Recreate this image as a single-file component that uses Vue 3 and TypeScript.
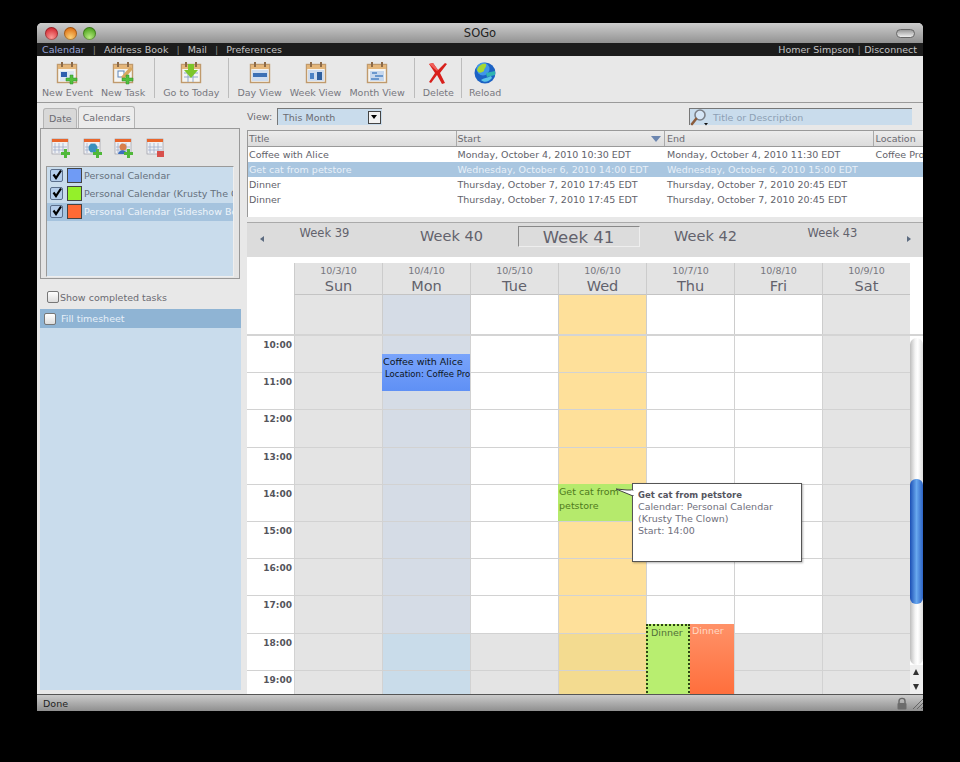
<script setup lang="ts">
import { ref } from 'vue';

const toolbar = [
  [
    { label: 'New Event', icon: 'event' },
    { label: 'New Task', icon: 'task' },
  ],
  [{ label: 'Go to Today', icon: 'today' }],
  [
    { label: 'Day View', icon: 'day' },
    { label: 'Week View', icon: 'week' },
    { label: 'Month View', icon: 'month' },
  ],
  [{ label: 'Delete', icon: 'delete' }],
  [{ label: 'Reload', icon: 'reload' }],
];

const calendars = [
  { name: 'Personal Calendar', color: '#6f9bf5', selected: false },
  { name: 'Personal Calendar (Krusty The Clown)', color: '#94f02a', selected: false },
  { name: 'Personal Calendar (Sideshow Bob)', color: '#ff6a35', selected: true },
];

const rows = [
  {
    title: 'Coffee with Alice',
    start: 'Monday, October 4, 2010 10:30 EDT',
    end: 'Monday, October 4, 2010 11:30 EDT',
    location: 'Coffee Project',
    selected: false,
  },
  {
    title: 'Get cat from petstore',
    start: 'Wednesday, October 6, 2010 14:00 EDT',
    end: 'Wednesday, October 6, 2010 15:00 EDT',
    location: '',
    selected: true,
  },
  {
    title: 'Dinner',
    start: 'Thursday, October 7, 2010 17:45 EDT',
    end: 'Thursday, October 7, 2010 20:45 EDT',
    location: '',
    selected: false,
  },
  {
    title: 'Dinner',
    start: 'Thursday, October 7, 2010 17:45 EDT',
    end: 'Thursday, October 7, 2010 20:45 EDT',
    location: '',
    selected: false,
  },
];

const days = [
  { date: '10/3/10', name: 'Sun', kind: 'weekend' },
  { date: '10/4/10', name: 'Mon', kind: 'mon' },
  { date: '10/5/10', name: 'Tue', kind: '' },
  { date: '10/6/10', name: 'Wed', kind: 'today' },
  { date: '10/7/10', name: 'Thu', kind: '' },
  { date: '10/8/10', name: 'Fri', kind: '' },
  { date: '10/9/10', name: 'Sat', kind: 'weekend' },
];

const hours = [10, 11, 12, 13, 14, 15, 16, 17, 18, 19];

const activeTab = ref('Calendars');
</script>

<template>
  <div class="page">
    <div class="window">
      <div class="titlebar">
        <div class="lights">
          <span class="light red"></span>
          <span class="light orange"></span>
          <span class="light green"></span>
        </div>
        <div class="title">SOGo</div>
        <span class="pill"></span>
      </div>

      <div class="nav">
        <div class="nav-links">
          <span class="current">Calendar</span><i>|</i>
          <span>Address Book</span><i>|</i>
          <span>Mail</span><i>|</i>
          <span>Preferences</span>
        </div>
        <div class="nav-links user">
          <span>Homer Simpson</span><i>|</i><span>Disconnect</span>
        </div>
      </div>

      <div class="toolbar">
        <div v-for="(group, g) in toolbar" :key="g" class="tool-group">
          <div v-for="tool in group" :key="tool.label" class="tool">
            <svg width="24" height="24" viewBox="0 0 24 24">
              <template v-if="tool.icon === 'delete'">
                <path d="M3 3 L7 2 L12 9 L19 2 L21 3 L14 12 L19 22 L16 23 L11 14 L5 22 L3 21 L9 12 Z" fill="#d8201c" />
                <path d="M3 3 L7 2 L12 9 L11 10 Z" fill="#f0605a" />
              </template>
              <template v-else-if="tool.icon === 'reload'">
                <circle cx="12" cy="12" r="10.5" fill="#1c62c4" />
                <circle cx="10" cy="8" r="6.5" fill="#3f96ea" />
                <path d="M4 9 C6 3 11 2 13 3 C14 6 11 7 11 10 C8 12 6 13 4 9 Z" fill="#a5d832" />
                <path d="M13 12 L22 10 L22 14 L14 16 Z" fill="#2fb4b0" />
                <path d="M8 19 C11 17 14 17 18 15 L19 17 C16 21 11 22 8 19 Z" fill="#5cc4e8" />
              </template>
              <template v-else>
                <rect x="2.5" y="3.5" width="19" height="18" fill="#f4f4f2" stroke="#c09a6c" stroke-width="1.4" />
                <rect x="3" y="4" width="18" height="4" fill="#e4b67a" />
                <rect x="6" y="1" width="2" height="5" fill="#8c6a48" />
                <rect x="16" y="1" width="2" height="5" fill="#8c6a48" />
                <template v-if="tool.icon === 'day'">
                  <rect x="4" y="9" width="16" height="11" fill="#cfdcee" />
                  <rect x="5" y="12" width="14" height="4" fill="#3c6fb4" />
                </template>
                <template v-if="tool.icon === 'week'">
                  <rect x="4" y="9" width="16" height="11" fill="#cfdcee" />
                  <rect x="6" y="12" width="4" height="6" fill="#4d82c4" />
                  <rect x="13" y="11" width="5" height="8" fill="#2f5f9e" />
                </template>
                <template v-if="tool.icon === 'month'">
                  <rect x="5" y="10" width="14" height="10" fill="#c7d8ee" />
                  <path d="M7 12 H12 M10 15 H18 M6 18 H14" stroke="#4d82c4" stroke-width="1.5" />
                </template>
                <template v-if="tool.icon === 'event'">
                  <rect x="5" y="10" width="14" height="10" fill="#dde6f2" />
                  <rect x="6" y="11" width="6" height="5" fill="#2f5fae" />
                </template>
                <template v-if="tool.icon === 'task'">
                  <rect x="7" y="10" width="6" height="6" fill="#fff" stroke="#5d84b8" />
                  <path d="M10 16 L19 6 L22 8 L13 18 Z" fill="#d8a860" />
                </template>
                <template v-if="tool.icon === 'today'">
                  <path d="M5 12 H19 M5 16 H19 M9 9 V21 M14 9 V21" stroke="#8fa8cc" />
                  <path d="M9 3 H15 V9 H19 L12 17 L5 9 H9 Z" fill="#7cc62a" />
                </template>
                <template v-if="tool.icon === 'event' || tool.icon === 'task'">
                  <path d="M15 14 H18 V17 H22 V20 H18 V23 H15 V20 H11 V17 H15 Z" fill="#52c03c" stroke="#2f8c2a" stroke-width=".5" />
                </template>
              </template>
            </svg>
            <span>{{ tool.label }}</span>
          </div>
        </div>
      </div>

      <div class="main">
        <aside class="sidebar">
          <div class="tabs">
            <span class="tab" :class="{ active: activeTab === 'Date' }">Date</span>
            <span class="tab" :class="{ active: activeTab === 'Calendars' }">Calendars</span>
          </div>
          <div class="cal-panel">
            <div class="cal-tools">
              <svg v-for="n in 4" :key="n" width="20" height="20" viewBox="0 0 20 20">
                <rect x="1" y="1" width="16" height="15" fill="#eef0f4" stroke="#8f8f9c" stroke-width=".6" />
                <rect x="1" y="1" width="16" height="3" fill="#e8662c" />
                <path d="M4 5 V15 M8 5 V15 M12 5 V15 M2 9 H16 M2 12 H16" stroke="#9aa8c4" stroke-width=".7" />
                <circle v-if="n === 2" cx="10" cy="10" r="4.5" fill="#3a8fbc" />
                <circle v-if="n === 3" cx="9" cy="9" r="3.5" fill="#d8804c" />
                <path v-if="n === 3" d="M4 16 C5 11 12 11 13 16 Z" fill="#3c6fc0" />
                <path v-if="n < 4" d="M13 11 H16 V14 H19 V17 H16 V20 H13 V17 H10 V14 H13 Z" fill="#50b83a" />
                <rect v-else x="11" y="13" width="7" height="6" fill="#d8504c" />
              </svg>
            </div>
            <ul class="cal-list">
              <li v-for="cal in calendars" :key="cal.name" :class="{ selected: cal.selected }">
                <span class="check">
                  <svg width="12" height="12" viewBox="0 0 12 12">
                    <path d="M2.5 5.5 L5 9 L10 1.5" fill="none" stroke="#000" stroke-width="2.2" />
                  </svg>
                </span>
                <span class="swatch" :style="{ background: cal.color }"></span>
                <span class="cal-name">{{ cal.name }}</span>
              </li>
            </ul>
          </div>
          <label class="completed"><span class="box"></span>Show completed tasks</label>
          <div class="tasks">
            <div class="task"><span class="box"></span>Fill timesheet</div>
          </div>
        </aside>

        <section class="content">
          <div class="filters">
            <span class="view-label">View:</span>
            <div class="select">
              <span>This Month</span>
              <span class="select-btn"></span>
            </div>
            <div class="search">
              <svg width="20" height="18" viewBox="0 0 20 18">
                <circle cx="10" cy="7" r="5" fill="#d6e6f6" stroke="#7c8088" stroke-width="1.6" />
                <path d="M6 11 L2 16" stroke="#8c5c3c" stroke-width="2.6" stroke-linecap="round" />
                <path d="M14 15 H18 L16 17.5 Z" fill="#111" />
              </svg>
              <span>Title or Description</span>
            </div>
          </div>

          <div class="event-table">
            <div class="thead">
              <span class="col-title">Title</span>
              <span class="col-start">Start<b class="sort"></b></span>
              <span class="col-end">End</span>
              <span class="col-loc">Location</span>
            </div>
            <div v-for="(row, i) in rows" :key="i" class="trow" :class="{ selected: row.selected }">
              <span class="col-title">{{ row.title }}</span>
              <span class="col-start">{{ row.start }}</span>
              <span class="col-end">{{ row.end }}</span>
              <span class="col-loc">{{ row.location }}</span>
            </div>
          </div>

          <div class="weeks">
            <span class="arrow left"></span>
            <span class="week small">Week 39</span>
            <span class="week">Week 40</span>
            <span class="week current">Week 41</span>
            <span class="week">Week 42</span>
            <span class="week small">Week 43</span>
            <span class="arrow right"></span>
          </div>

          <div class="day-head">
            <div class="gutter"></div>
            <div v-for="day in days" :key="day.name" class="day-col">
              <div class="day-name">
                <small>{{ day.date }}</small>
                <strong>{{ day.name }}</strong>
              </div>
              <div class="allday" :class="day.kind"></div>
            </div>
          </div>

          <div class="scroller">
            <div class="grid">
              <div v-for="h in hours" :key="h" class="hour" :class="{ off: h >= 18 }">
                <div class="time">{{ h }}:00</div>
                <div v-for="day in days" :key="day.name" class="cell" :class="day.kind"></div>
              </div>

              <div class="event coffee">
                <b>Coffee with Alice</b>
                <em>Location: Coffee Project</em>
              </div>
              <div class="event cat">Get cat from petstore</div>
              <div class="event dinner-a">Dinner</div>
              <div class="event dinner-b">Dinner</div>

              <div class="tip">
                <svg class="tip-arrow" width="18" height="12" viewBox="0 0 18 12">
                  <path d="M0 1 L11 2 L17 2 L17 8 Z" fill="#fff" stroke="#444" />
                  <path d="M15 2.6 H18 V7 H16 Z" fill="#fff" />
                </svg>
                <b>Get cat from petstore</b>
                <span>Calendar: Personal Calendar (Krusty The Clown)</span>
                <span>Start: 14:00</span>
              </div>
            </div>

            <div class="scrollbar">
              <div class="track">
                <div class="thumb"></div>
              </div>
              <div class="steppers">
                <span class="up"></span>
                <span class="down"></span>
              </div>
            </div>
          </div>
        </section>
      </div>

      <div class="status">
        <span>Done</span>
        <div class="status-right">
          <svg width="12" height="13" viewBox="0 0 12 13">
            <path d="M3 6 V4 C3 0.5 9 0.5 9 4 V6" fill="none" stroke="#666" stroke-width="1.4" />
            <rect x="1.5" y="6" width="9" height="6.5" rx="1" fill="#6c6c6c" />
          </svg>
          <svg width="11" height="11" viewBox="0 0 11 11">
            <path d="M1 11 L11 1 M5 11 L11 5 M9 11 L11 9" stroke="#666" />
          </svg>
        </div>
      </div>
    </div>
  </div>
</template>

<style>
html,
body {
  margin: 0;
  background: #000;
}
</style>

<style scoped>
.page {
  width: 960px;
  height: 762px;
  padding: 23px 37px 51px;
  box-sizing: border-box;
  background: #000;
  font-family: "DejaVu Sans", sans-serif;
  font-size: 9.5px;
  color: #6b6b72;
  overflow: hidden;
}

.window {
  display: flex;
  flex-direction: column;
  height: 688px;
  background: #e8e8e8;
  border-radius: 5px 5px 0 0;
  overflow: hidden;
}

.titlebar {
  display: flex;
  align-items: center;
  justify-content: space-between;
  flex: none;
  height: 20px;
  padding: 0 8px;
  background: linear-gradient(#cdcdcd, #929292);
}

.lights {
  display: flex;
  gap: 6px;
  width: 60px;
}

.light {
  width: 13px;
  height: 13px;
  border-radius: 50%;
  box-shadow: inset 0 0 0 1px rgba(0, 0, 0, 0.3);
}

.red {
  background: radial-gradient(circle at 50% 80%, #fb9a96, #d8323a 70%);
}

.orange {
  background: radial-gradient(circle at 50% 80%, #fcd177, #e0781c 70%);
}

.green {
  background: radial-gradient(circle at 50% 80%, #b8ec80, #54a824 70%);
}

.title {
  font-size: 11.5px;
  color: #222;
}

.pill {
  width: 17px;
  height: 7px;
  margin-left: 41px;
  border: 1px solid #666;
  border-radius: 5px;
  background: linear-gradient(#999, #eee);
}

.nav {
  display: flex;
  justify-content: space-between;
  align-items: center;
  flex: none;
  height: 13px;
  padding: 0 6px 0 5px;
  background: #1c1c1c;
  color: #c4c4c4;
}

.nav i {
  margin: 0 8px;
  font-style: normal;
  color: #888;
}

.nav .user i {
  margin: 0 3.5px;
}

.nav .current {
  color: #98a4d8;
}

.toolbar {
  display: flex;
  flex: none;
  height: 46px;
  border-bottom: 1px solid #9a9a9a;
  box-sizing: content-box;
}

.tool-group {
  display: flex;
  gap: 8px;
  height: 40px;
  margin-top: 2px;
  padding: 0 9px 0 8px;
  border-right: 1px solid #bcbcbc;
}

.tool-group:first-child {
  padding-left: 5px;
}

.tool-group:nth-child(4) {
  padding-right: 7px;
}

.tool-group:last-child {
  padding-left: 7px;
  border: 0;
}

.tool {
  display: flex;
  flex-direction: column;
  align-items: center;
  gap: 2px;
  padding-top: 3px;
  color: #77777e;
}

.tool span {
  white-space: nowrap;
}

.main {
  display: flex;
  flex: 1;
  min-height: 0;
}

.sidebar {
  display: flex;
  flex-direction: column;
  flex: none;
  width: 209px;
  padding: 3px 0 4px 3px;
  box-sizing: border-box;
}

.tabs {
  display: flex;
  height: 22px;
  padding-left: 3px;
  gap: 1px;
}

.tab {
  display: flex;
  align-items: center;
  padding: 0 4px 0 5px;
  margin-top: 2px;
  background: #d8d8d8;
  border: 1px solid #b4b4b4;
  border-bottom: 0;
  border-radius: 3px 3px 0 0;
}

.tab.active {
  margin-top: 0;
  padding: 0 4px;
  background: #ececec;
}

.cal-panel {
  width: 200px;
  height: 151px;
  box-sizing: border-box;
  border: 1px solid #999;
  background: #e4e4e4;
  padding: 9px 5px 2px;
}

.cal-tools {
  display: flex;
  gap: 11.5px;
  padding-left: 5px;
  height: 28px;
}

.cal-list {
  list-style: none;
  margin: 0;
  height: 109px;
  padding: 0;
  overflow: hidden;
  background: #c9dcec;
  border: 1px solid;
  border-color: #9a9a9a #eee #eee #9a9a9a;
}

.cal-list li {
  display: flex;
  align-items: center;
  height: 18px;
  padding-bottom: 1px;
  box-sizing: border-box;
  white-space: nowrap;
  color: #65707c;
}

.cal-list li.selected {
  background: #a5c3de;
  color: #eef4fa;
}

.check {
  flex: none;
  width: 11px;
  height: 11px;
  margin: 0 4px 0 3px;
  border: 1px solid #5b6f8c;
  border-radius: 2px;
  background: #b4cdea;
}

.check svg {
  display: block;
  margin: -1px 0 0 0;
}

.swatch {
  flex: none;
  width: 13px;
  height: 13px;
  margin-right: 2px;
  border: 1px solid #444;
}

.completed {
  display: flex;
  align-items: center;
  height: 20px;
  margin-top: 8px;
  padding-left: 7px;
}

.box {
  width: 10px;
  height: 10px;
  margin-right: 1px;
  border: 1px solid #777;
  border-radius: 2px;
  background: linear-gradient(#fff, #ddd);
}

.tasks {
  flex: 1;
  width: 201px;
  margin-top: 2px;
  background: #c9dcec;
}

.task {
  display: flex;
  align-items: center;
  gap: 4px;
  height: 19px;
  padding-left: 4px;
  background: #8fb4d4;
  color: #e6eff8;
}

.content {
  display: flex;
  flex-direction: column;
  flex: 1;
  min-width: 0;
  padding-left: 1px;
}

.filters {
  display: flex;
  align-items: center;
  flex: none;
  height: 27px;
}

.view-label {
  width: 30px;
}

.select {
  display: flex;
  align-items: center;
  justify-content: space-between;
  width: 105px;
  height: 17px;
  box-sizing: border-box;
  padding-left: 5px;
  background: #c9dcec;
  border-left: 1px solid #777;
  border-top: 1px solid #777;
}

.select-btn {
  position: relative;
  width: 13px;
  height: 13px;
  margin-right: 1px;
  background: #f2f2f2;
  border: 1px solid #444;
  box-sizing: border-box;
}

.select-btn::after {
  content: "";
  position: absolute;
  left: 2px;
  top: 3px;
  border: 3.5px solid transparent;
  border-top: 4px solid #000;
}

.search {
  display: flex;
  align-items: center;
  gap: 3px;
  width: 223px;
  height: 17px;
  box-sizing: border-box;
  margin-left: 307px;
  background: #c9dcec;
  border-left: 1px solid #777;
  border-top: 1px solid #777;
  color: #8da0b4;
}

.event-table {
  flex: none;
  height: 87px;
  background: #fff;
  border-left: 1px solid #999;
  overflow: hidden;
}

.thead,
.trow {
  display: flex;
  white-space: nowrap;
}

.thead {
  height: 17px;
  align-items: center;
  background: linear-gradient(#ececec, #dcdcdc);
  border-top: 1px solid #999;
  border-bottom: 1px solid #999;
  box-sizing: border-box;
}

.thead span {
  display: flex;
  align-items: center;
  height: 100%;
  box-sizing: border-box;
  border-right: 1px solid #aaa;
}

.thead .col-loc {
  border-right: 0;
}

.trow {
  height: 15px;
  align-items: center;
  color: #62626a;
}

.trow.selected {
  background: #a9c6e0;
  color: #e8f0f8;
}

.col-title,
.col-start,
.col-end {
  flex: none;
  width: 208.5px;
  padding-left: 1px;
  box-sizing: border-box;
  overflow: hidden;
}

.col-end {
  padding-left: 2px;
}

.col-loc {
  padding-left: 2px;
}

.sort {
  margin-left: auto;
  margin-right: 3px;
  border: 5px solid transparent;
  border-top: 6px solid #6c86b0;
  border-bottom: 0;
}

.weeks {
  position: relative;
  display: flex;
  align-items: center;
  justify-content: center;
  flex: none;
  height: 35px;
  margin-top: 5px;
  padding-right: 13px;
  background: #dcdcdc;
  border-top: 1px solid #aaa;
  box-sizing: border-box;
}

.week {
  width: 127px;
  margin-bottom: 8px;
  text-align: center;
  font-size: 14.5px;
  color: #62626c;
  box-sizing: border-box;
}

.week.small {
  align-self: flex-start;
  margin: 3px 0 0;
  font-size: 11.5px;
}

.week.current {
  align-self: flex-start;
  width: 122px;
  margin: 3px 2.5px 0;
  height: 21px;
  line-height: 21px;
  font-size: 16.5px;
  border: 1px solid;
  border-color: #888 #eee #eee #888;
}

.arrow {
  position: absolute;
  top: 13px;
  border: 3px solid transparent;
  border-left: 0;
  border-right: 4px solid #5c6b80;
}

.arrow.left {
  left: 13px;
}

.arrow.right {
  right: 12px;
  transform: scaleX(-1);
}

.day-head {
  display: flex;
  flex: none;
  height: 79px;
  padding-top: 6px;
  padding-right: 13px;
  box-sizing: border-box;
  background: #fff;
  border-bottom: 2px solid #d4d4d4;
}

.gutter,
.time {
  flex: none;
  width: 47px;
}

.day-col {
  flex: none;
  width: 88px;
}

.day-name {
  display: flex;
  flex-direction: column;
  align-items: center;
  height: 32px;
  box-sizing: border-box;
  padding-top: 2px;
  background: #e3e3e3;
  border-left: 1px solid #ccc;
  border-bottom: 1px solid #c4c4c4;
  color: #77777e;
}

.day-name strong {
  font-weight: 400;
  font-size: 14.5px;
  line-height: 18px;
  color: #62626c;
}

.day-name small {
  font-size: 9.5px;
  line-height: 12px;
}

.allday {
  height: 39px;
  background: #fff;
  border-left: 1px solid #ccc;
  box-sizing: border-box;
}

.scroller {
  position: relative;
  flex: 1;
  min-height: 0;
  overflow: hidden;
  background: #fff;
}

.grid {
  position: relative;
}

.hour {
  display: flex;
  height: 37.2px;
  box-sizing: border-box;
  border-bottom: 1px solid #d2d2d2;
}

.time {
  padding: 4px 2px 0 0;
  box-sizing: border-box;
  text-align: right;
  font-size: 9px;
  font-weight: 700;
  color: #55555c;
}

.cell {
  flex: none;
  width: 88px;
  box-sizing: border-box;
  border-left: 1px solid #d2d2d2;
  background: #fff;
}

.weekend,
.hour.off .cell {
  background: #e4e4e4;
}

.mon {
  background: #d5dce6;
}

.today {
  background: #fee09a;
}

.hour.off .cell.mon {
  background: #c9dcea;
}

.hour.off .cell.today {
  background: #f3db90;
}

.event {
  position: absolute;
  box-sizing: border-box;
  line-height: 14px;
  overflow: hidden;
}

.coffee {
  left: 135px;
  top: 18px;
  width: 88px;
  height: 37px;
  padding: 1px 0 0 1px;
  background: linear-gradient(#79a4fb, #5f90f5);
  color: #0c1420;
  white-space: nowrap;
}

.coffee b,
.coffee em {
  display: block;
  font-weight: 400;
  font-style: normal;
}

.coffee em {
  padding-left: 2px;
  font-size: 8.5px;
  line-height: 10px;
}

.cat {
  left: 311px;
  top: 148px;
  width: 88px;
  height: 37px;
  padding: 1px 12px 0 1px;
  background: #b5ea6c;
  color: #4f7a1c;
}

.dinner-a {
  left: 399px;
  top: 288px;
  width: 44px;
  height: 80px;
  padding: 0 3px;
  background: #b8ee70;
  border: 2px dotted #2c4414;
  color: #52703a;
}

.dinner-b {
  left: 443px;
  top: 288px;
  width: 44px;
  height: 80px;
  padding: 0 2px;
  background: linear-gradient(#ff9268, #ff6a36);
  color: #ffd9c4;
}

.tip {
  position: absolute;
  left: 385px;
  top: 147px;
  display: flex;
  flex-direction: column;
  width: 170px;
  height: 79px;
  box-sizing: border-box;
  padding: 5px 5px;
  background: #fff;
  border: 1px solid #555;
  box-shadow: 1px 1px 2px rgba(0, 0, 0, 0.3);
  line-height: 12px;
  color: #70707c;
}

.tip b {
  font-size: 8.5px;
  color: #55555f;
}

.tip-arrow {
  position: absolute;
  left: -17px;
  top: 4px;
}

.scrollbar {
  position: absolute;
  top: 0;
  right: 0;
  bottom: 0;
  display: flex;
  flex-direction: column;
  width: 13px;
  background: #fff;
}

.track {
  position: relative;
  flex: 1;
  margin-top: 2px;
  border-radius: 7px;
  background: linear-gradient(90deg, #bdbdbd, #f4f4f4 40%, #fff 60%, #dcdcdc);
}

.thumb {
  position: absolute;
  top: 141px;
  left: 0;
  right: 0;
  height: 125px;
  border-radius: 6px;
  background: linear-gradient(90deg, #1c4fb4, #68a8ee 50%, #2c62c4);
}

.steppers {
  height: 29px;
  flex: none;
  display: flex;
  flex-direction: column;
  background: #efefef;
}

.steppers span {
  position: relative;
  flex: 1;
}

.steppers span::after {
  content: "";
  position: absolute;
  left: 3px;
  top: 4px;
  border-left: 3.5px solid transparent;
  border-right: 3.5px solid transparent;
}

.up::after {
  border-bottom: 6px solid #333;
}

.down::after {
  border-top: 6px solid #333;
}

.status {
  display: flex;
  align-items: center;
  justify-content: space-between;
  flex: none;
  height: 17px;
  padding: 0 0 0 6px;
  border-top: 1px solid #555;
  box-sizing: border-box;
  background: linear-gradient(#cbcbcb, #8f8f8f);
  color: #222;
}

.status-right {
  display: flex;
  align-items: center;
  gap: 4px;
}
</style>
